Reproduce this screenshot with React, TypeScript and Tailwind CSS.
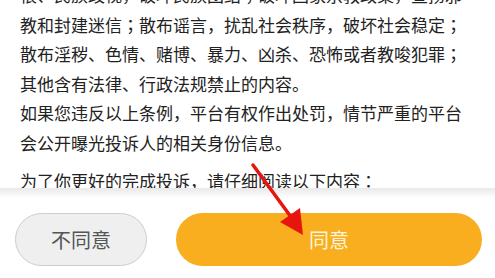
import React from "react";

const lines1 = [
  "恨、民族歧视，破坏民族团结；破坏国家宗教政策，宣扬邪",
  "教和封建迷信；散布谣言，扰乱社会秩序，破坏社会稳定；",
  "散布淫秽、色情、赌博、暴力、凶杀、恐怖或者教唆犯罪；",
  "其他含有法律、行政法规禁止的内容。",
  "如果您违反以上条例，平台有权作出处罚，情节严重的平台",
  "会公开曝光投诉人的相关身份信息。",
];

function Line({ text }: { text: string }) {
  const parts = text.split(/([；：])/);
  return (
    <div className="whitespace-nowrap">
      {parts.map((p, i) =>
        p === "；" || p === "：" ? (
          <span key={i} style={{ fontFamily: '"Noto Sans CJK TC", sans-serif' }}>
            {p}
          </span>
        ) : (
          <React.Fragment key={i}>{p}</React.Fragment>
        )
      )}
    </div>
  );
}

export default function App() {
  return (
    <div
      className="relative flex h-[278px] w-[495px] flex-col overflow-hidden bg-white"
      style={{ fontFamily: '"Noto Sans CJK SC", "Noto Sans", sans-serif' }}
    >
      <div className="h-[188px] shrink-0 overflow-hidden">
        <div className="mt-[-20px] pl-5 text-[17px] leading-[29.5px] text-[#222222]">
          {lines1.map((l, i) => (
            <Line key={i} text={l} />
          ))}
          <div className="mt-[9px]">
            <Line text="为了你更好的完成投诉，请仔细阅读以下内容：" />
          </div>
        </div>
      </div>
      <div className="flex flex-1 flex-col bg-white">
        <div className="h-[10px] bg-gradient-to-b from-[#e9e9e9] to-white" />
        <div className="flex gap-[29px] pl-[15px] pr-[13px] pt-[15px]">
          <button className="flex h-[53px] w-[132px] items-center justify-center rounded-full border border-[#cdcdcd] bg-[#efefef] text-[20px] text-[#555555]">
            不同意
          </button>
          <button className="flex h-[53px] flex-1 items-center justify-center rounded-full bg-[#f8ae1f] text-[20px] text-[#fff4d8]">
            同意
          </button>
        </div>
      </div>
      <svg
        className="pointer-events-none absolute left-0 top-0"
        width="495"
        height="278"
        viewBox="0 0 495 278"
      >
        <line x1="253" y1="165" x2="291" y2="217" stroke="#e8140e" strokeWidth="3.5" strokeLinecap="round" />
        <polygon points="280,222 300,208 303,235" fill="#e8140e" />
      </svg>
    </div>
  );
}
